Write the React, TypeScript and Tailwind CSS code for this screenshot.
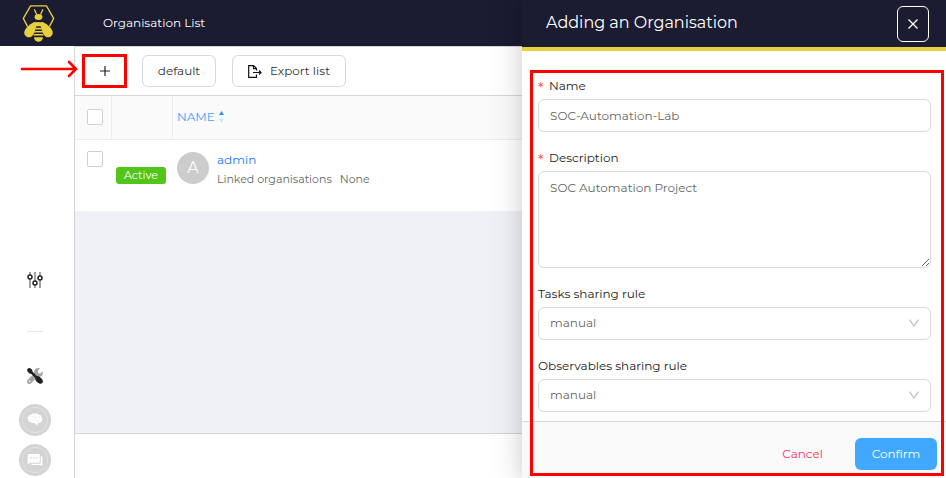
import type { ReactNode } from 'react';

function BeeLogo() {
  return (
    <svg viewBox="66 9 100 117" className="h-[39px] w-[33px]" role="img" aria-label="Bee">
      <g fill="none" stroke="#e8cf3f" strokeWidth="4" strokeLinejoin="round">
        <path d="M83 77 70 52 92 14h48l22 38-13 25" />
        <path d="M104 26l6 13M129 26l-6 13" strokeLinecap="round" />
      </g>
      <g fill="#e8cf3f">
        <ellipse cx="116" cy="48" rx="12" ry="9" />
        <path d="M105 66q11-6 22 0l-4 10h-14z" />
        <path d="M106 63C95 64 75 82 73 93c-2 14 15 21 24 12 7-8 13-27 14-40z" />
        <path d="M126 63c11 1 31 19 33 30 2 14-15 21-24 12-7-8-13-27-14-40z" />
        <path d="M108 80h16l2 6h-20zM104 90h24l2 5h-28zM102 99h28l2 5h-32zM102 109h28c-1 9-8 14-14 14s-13-5-14-14z" />
      </g>
    </svg>
  );
}

function SlidersIcon() {
  return (
    <svg viewBox="0 0 16 16" className="size-4" fill="none" aria-hidden="true">
      <path d="M3 0v16M8 0v16M13 0v16" stroke="#8c8c8c" strokeWidth="1.6" />
      <g fill="#fff" stroke="#222" strokeWidth="1.5">
        <circle cx="3" cy="5" r="2" />
        <circle cx="8" cy="11" r="2" />
        <circle cx="13" cy="6" r="2" />
      </g>
    </svg>
  );
}

function ToolsIcon() {
  return (
    <svg viewBox="0 0 48 48" className="size-4" aria-hidden="true">
      <path
        d="M47 10l-8 7-6-2-1-6 7-8c-7-2-13 0-16 5-2 4-2 7-1 10L2 36c-3 3-2 7 0 10 3 3 7 3 10 0l20-20c9 3 18-5 15-16z"
        fill="#a3a3a3"
      />
      <circle cx="8" cy="40" r="2.5" fill="#fff" />
      <path
        d="M2 2c3-3 8-2 11 1 3 2 3 5 4 8l12 13c5-1 9 2 13 6 6 6 7 11 4 15-4 4-9 3-15-2-5-4-7-8-6-13L13 18c-4 0-7-2-9-5-3-3-5-8-2-11z"
        fill="#222"
      />
    </svg>
  );
}

function BrainIcon() {
  return (
    <svg viewBox="0 0 16 14" className="h-[14px] w-4 shrink-0" aria-hidden="true">
      <path
        d="M4.500 1.500C5.500.3 7.200.3 8 1c1.500-.8 3.200-.4 4 .8 1.700.1 2.700 1.300 2.600 2.700 1 .9 1.100 2.500.2 3.400-.2 1.200-1.400 1.900-2.600 1.700-.4.500-.9.700-1.400.8L10.300 13 8.500 10.500c-.8.1-1.500-.2-1.900-.7-1.200.4-2.500 0-3-.9C2.200 9 1 8 1.200 6.700.1 5.700.4 4.200 1.500 3.600 1.700 2.300 3 1.400 4.500 1.500z"
        fill="#fff"
      />
      <path
        d="M4 3.500c1-.5 2 0 2.200 1M7.800 2.500v2c0 1 2 1 2 0M11.500 3.500c1 .2 1.500 1 1 2M3.500 6.500c1 .8 2.500.6 3-.5M9.500 7.500c1 .6 2 .4 2.500-.5"
        fill="none"
        stroke="#d4d4d4"
        strokeWidth=".5"
      />
    </svg>
  );
}

function ChatIcon() {
  return (
    <svg viewBox="0 0 16 14" className="h-[14px] w-4 shrink-0" aria-hidden="true">
      <path d="M1.800 1h9.900c.7 0 1.100.4 1.100 1.100v6.600c0 .7-.4 1.100-1.100 1.100H3L.7 11.500V2.100C.7 1.400 1.100 1 1.800 1z" fill="#fff" />
      <path d="M13.700 3.300h.5c.8 0 1.200.4 1.200 1.200v9L13.500 12H5.200c-.6 0-1-.4-1-1.200h8.300c.8 0 1.200-.4 1.200-1.200z" fill="#fff" />
      <path d="M3.500 5h1.400M6.200 5h1.400M8.900 5h1.400" stroke="#c8c8c8" strokeWidth="1.200" />
    </svg>
  );
}

function ExportIcon() {
  return (
    <svg viewBox="0 0 14 13" className="h-[13px] w-[14px]" fill="none" stroke="#111" strokeWidth="1.2" aria-hidden="true">
      <path d="M8.500 9.500v2.800H.7V.7h5L8.500 3.500V5.500M5.500.7v3h3M5 7.500h8M11 5.500l2 2-2 2" />
    </svg>
  );
}

function RoundButton({ label, children }: { label: string; children: ReactNode }) {
  return (
    <button
      type="button"
      aria-label={label}
      className="flex size-8 items-center justify-center rounded-full bg-[#d4d4d4] p-[3px]"
    >
      <span className="flex size-full items-center justify-center rounded-full border border-[#e2e2e2]">{children}</span>
    </button>
  );
}

function Checkbox({ label }: { label: string }) {
  return (
    <input
      type="checkbox"
      aria-label={label}
      className="block size-4 appearance-none rounded-xs border border-[#d0d0d0] bg-white checked:bg-[#40a9ff]"
    />
  );
}

const fieldStyle = 'w-full rounded-md border border-[#d9d9d9] bg-white px-[11px] text-xs leading-5 text-[#666]';

function Field({ id, label, required, children }: { id: string; label: string; required?: boolean; children: ReactNode }) {
  return (
    <div className="flex flex-col gap-[3px]">
      <label htmlFor={id} className="flex h-5 gap-1 leading-5 text-[#222]">
        {required && <span className="w-[7px] pt-[2px] text-sm leading-5 text-[#ff4d4f]">*</span>}
        {label}
      </label>
      {children}
    </div>
  );
}

function SharingSelect({ id }: { id: string }) {
  return (
    <div className="relative">
      <select id={id} defaultValue="manual" className={`${fieldStyle} block h-[33px] appearance-none pb-[2px]`}>
        <option value="manual">manual</option>
        <option value="all">autoShare</option>
      </select>
      <svg
        viewBox="0 0 10 8"
        className="pointer-events-none absolute top-3 right-3 h-2 w-[10px]"
        fill="none"
        stroke="#bfbfbf"
        strokeWidth="1.2"
        aria-hidden="true"
      >
        <path d="M.6.6 5 7 9.400.6" />
      </svg>
    </div>
  );
}

function Sidebar() {
  return (
    <aside className="flex w-[75px] shrink-0 flex-col items-center justify-end border-r border-[#d6d6d9] pr-[5px] pb-[2px]">
      <button type="button" aria-label="Settings" className="mb-[43px]">
        <SlidersIcon />
      </button>
      <hr className="mb-9 w-4 border-[#e8e8e8]" />
      <button type="button" aria-label="Tools" className="mb-5">
        <ToolsIcon />
      </button>
      <div className="flex flex-col gap-2">
        <RoundButton label="Knowledge">
          <BrainIcon />
        </RoundButton>
        <RoundButton label="Chat">
          <ChatIcon />
        </RoundButton>
      </div>
    </aside>
  );
}

function OrganisationTable() {
  return (
    <table className="w-full table-fixed border-separate border-spacing-0 bg-white text-left">
      <colgroup>
        <col className="w-[37px]" />
        <col className="w-[61px]" />
        <col />
      </colgroup>
      <thead>
        <tr className="h-11 bg-[#fafafa]">
          <th className="border-r border-b border-[#ececec] pb-px pl-3">
            <Checkbox label="Select all" />
          </th>
          <th className="border-r border-b border-[#ececec]" aria-label="Status" />
          <th className="border-b border-[#ececec] pb-[2px] pl-1 font-normal text-[#40a0ff]">
            <button type="button" className="flex items-center gap-1 leading-5">
              NAME
              <svg viewBox="0 0 5 12" className="h-3 w-[5px]" aria-hidden="true">
                <path d="M0 4 2.500 0 5 4z" fill="#2f8fee" />
                <path d="M0 8h5l-2.500 4z" fill="#cfe6fb" />
              </svg>
            </button>
          </th>
        </tr>
      </thead>
      <tbody>
        <tr className="h-[71px] align-top">
          <td className="pt-[11px] pl-3">
            <Checkbox label="Select admin" />
          </td>
          <td className="pt-[27px] pl-1">
            <span className="block h-[17px] w-[50px] rounded-[3px] bg-[#52c41a] text-center text-[11px] leading-4 text-white">
              Active
            </span>
          </td>
          <td className="pt-3 pl-1">
            <div className="flex gap-2">
              <span className="flex size-8 shrink-0 items-center justify-center rounded-full bg-[#ccc] text-base text-white">
                A
              </span>
              <div>
                <a href="#admin" className="block leading-4 text-[#1677ff]">
                  admin
                </a>
                <p className="mt-[3px] flex gap-2 text-[11px] leading-4 text-[#666]">
                  <span>Linked organisations</span>
                  <span>None</span>
                </p>
              </div>
            </div>
          </td>
        </tr>
      </tbody>
    </table>
  );
}

function Drawer() {
  return (
    <section
      aria-label="Adding an Organisation"
      className="absolute inset-y-0 right-0 flex w-[424px] flex-col bg-white shadow-[-6px_0_30px_8px_rgba(0,0,0,0.05),-3px_0_16px_rgba(0,0,0,0.1)]"
    >
      <header className="flex h-[51px] shrink-0 items-center justify-between border-b-4 border-[#e9d03f] bg-[#1b1b32] pr-[17px] pl-6">
        <h2 className="pb-[2px] text-base leading-6 text-white">Adding an Organisation</h2>
        <button
          type="button"
          aria-label="Close"
          className="flex h-9 w-8 items-center justify-center rounded-md border border-white"
        >
          <svg viewBox="0 0 10 10" className="size-[10px]" stroke="#fff" strokeWidth="1.3" aria-hidden="true">
            <path d="M.5.5l9 9M9.500.5l-9 9" />
          </svg>
        </button>
      </header>
      <form className="flex grow flex-col justify-between" onSubmit={(e) => e.preventDefault()}>
        <div className="flex flex-col gap-4 pt-[25px] pr-[15px] pl-4">
          <Field id="name" label="Name" required>
            <input id="name" defaultValue="SOC-Automation-Lab" className={`${fieldStyle} h-[33px]`} />
          </Field>
          <Field id="description" label="Description" required>
            <textarea
              id="description"
              defaultValue="SOC Automation Project"
              className={`${fieldStyle} block h-[97px] py-[6px]`}
            />
          </Field>
          <Field id="tasks" label="Tasks sharing rule">
            <SharingSelect id="tasks" />
          </Field>
          <Field id="observables" label="Observables sharing rule">
            <SharingSelect id="observables" />
          </Field>
        </div>
        <footer className="flex h-[57px] items-center justify-end gap-4 border-t border-[#d9d9d9] bg-[#f9f9f9] pt-2 pr-[9px]">
          <button type="button" className="h-8 px-4 text-[#f5365c]">
            Cancel
          </button>
          <button type="submit" className="h-8 w-[82px] rounded-md bg-[#40a9ff] text-white">
            Confirm
          </button>
        </footer>
      </form>
      <div className="pointer-events-none absolute top-[70px] right-[2px] bottom-[2px] left-2 border-3 border-[#f00]" />
    </section>
  );
}

export default function App() {
  return (
    <div className="relative flex h-screen min-h-[478px] flex-col overflow-hidden bg-white font-[Montserrat,Inter,sans-serif] text-xs text-[#333]">
      <header className="flex h-[46px] shrink-0 items-center gap-12 bg-[#1b1b32] pl-[22px]">
        <BeeLogo />
        <h1 className="pb-px leading-5 text-white">Organisation List</h1>
      </header>
      <div className="flex grow">
        <Sidebar />
        <main className="flex min-w-0 grow flex-col border-t border-[#d6d6d9]">
          <div className="flex h-[49px] shrink-0 items-center border-b border-[#d6d6d9] pl-[7px]">
            <button
              type="button"
              aria-label="Add organisation"
              className="mr-[15px] flex h-[34px] w-[45px] items-center justify-center border-3 border-[#f00]"
            >
              <svg viewBox="0 0 10 10" className="size-[10px]" stroke="#222" strokeWidth="1.2" aria-hidden="true">
                <path d="M5 0v10M0 5h10" />
              </svg>
            </button>
            <button type="button" className="mr-4 h-8 w-[74px] rounded-md border border-[#d9d9d9]">
              default
            </button>
            <button
              type="button"
              className="flex h-8 w-[114px] items-center justify-center gap-2 rounded-md border border-[#d9d9d9]"
            >
              <ExportIcon />
              Export list
            </button>
          </div>
          <div className="grow bg-[#f0f1f6]">
            <OrganisationTable />
          </div>
          <div className="h-[45px] shrink-0 border-t border-[#d6d6d9]" />
        </main>
      </div>
      <svg
        viewBox="0 0 58 18"
        className="pointer-events-none absolute top-[60px] left-[20px] h-[18px] w-[58px]"
        fill="none"
        stroke="#f00"
        strokeWidth="2.600"
        strokeLinecap="round"
        aria-hidden="true"
      >
        <path d="M2 9h54M49 2l7 7-7 7" />
      </svg>
      <Drawer />
    </div>
  );
}
